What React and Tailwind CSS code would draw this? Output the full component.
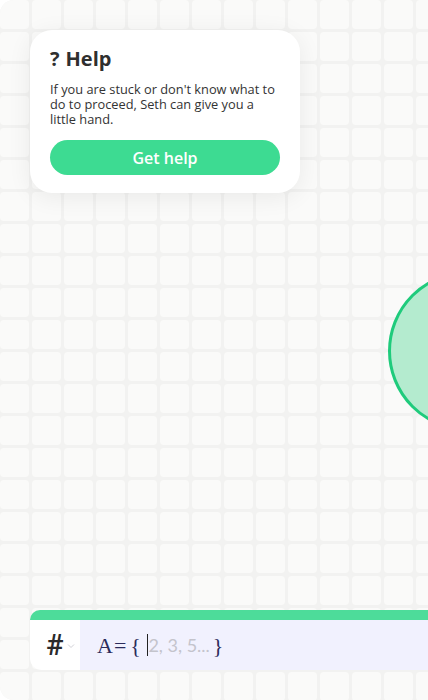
import React from "react";

const cells = Array.from({ length: 14 * 22 });

export default function App() {
    return (
        <div className="w-[428px] h-[700px] bg-white overflow-hidden">
            <div className="relative w-full h-full rounded-l-[14px] overflow-hidden bg-[#f2f2f1] flex flex-col" style={{ fontFamily: "'Open Sans', Lato, sans-serif" }}>

                {/* grid paper background */}
                <div className="absolute top-0 left-0 grid grid-cols-[repeat(14,29px)] auto-rows-[29px] gap-[3px]">
                    {cells.map((_, i) => (
                        <div key={i} className="rounded-[4px] bg-[#fafaf9]"></div>
                    ))}
                </div>

                {/* circle on the canvas */}
                <div className="absolute left-[388px] top-[271px] w-[160px] h-[160px] rounded-full border-[3px] border-[#1fcb7c] bg-[#b4ebcf]"></div>

                {/* Help card */}
                <div className="relative z-10 mt-[30px] ml-[30px] w-[270px] bg-white rounded-[22px] shadow-[0_4px_24px_rgba(0,0,0,0.07)] px-5 pt-[17px] pb-[18px]">
                    <h2 className="text-[20px] font-bold text-[#2f2f2f] leading-6 flex items-center gap-[6px]">
                        <span>?</span>
                        <span>Help</span>
                    </h2>
                    <p className="mt-[11px] text-[12.8px] leading-[15px] text-[#333]">
                        If you are stuck or don't know what to do to proceed, Seth can give you a little hand.
                    </p>
                    <button className="mt-[13px] w-full h-[35px] rounded-full bg-[#3ddb92] text-white text-[16px] font-semibold">
                        Get help
                    </button>
                </div>

                {/* Input bar */}
                <div className="relative z-10 mt-auto mb-[30px] ml-[30px] flex flex-col">
                    <div className="h-[10px] bg-[#4ddc9a] rounded-tl-[12px]"></div>
                    <div className="flex h-[50px]">
                        <div className="w-[50px] bg-white rounded-bl-[12px] flex items-center pl-[16px] gap-[3px]">
                            <span className="text-[29px] leading-none text-[#2a2a2a] font-medium" style={{ fontFamily: "Roboto, sans-serif" }}>#</span>
                            <svg width="8" height="6" viewBox="0 0 8 6" className="mt-[2px]">
                                <path d="M1 1.5l3 3 3-3" fill="none" stroke="#d0d0d6" strokeWidth="1" />
                            </svg>
                        </div>
                        <div className="flex-1 bg-[#f1f1fe] flex items-center pl-[17px] text-[22px]" style={{ fontFamily: "'Liberation Serif', serif" }}>
                            <span className="text-[#2b2b5c]">A</span>
                            <span className="text-[#2b2b5c] ml-[1px]">=</span>
                            <span className="text-[#2b2b5c] ml-[4px]">{"{"}</span>
                            <span className="ml-[6px] w-[1.5px] h-[22px] bg-[#222]"></span>
                            <span className="text-[#c4c4cc] text-[18px]" style={{ fontFamily: "Lato, sans-serif" }}>2, 3, 5...</span>
                            <span className="ml-[3px] text-[#2b2b5c]">{"}"}</span>
                        </div>
                    </div>
                </div>
            </div>
        </div>
    );
}
